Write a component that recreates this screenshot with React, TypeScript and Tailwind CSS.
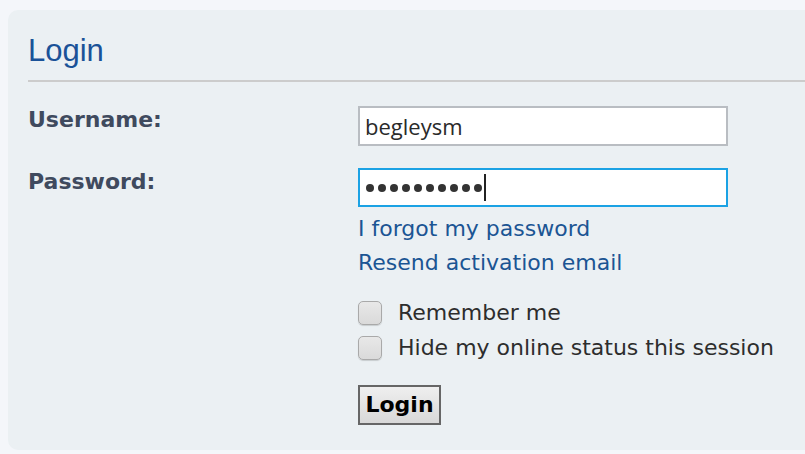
import { useState } from 'react';

const verdana = { fontFamily: 'Verdana, "DejaVu Sans", sans-serif' };

function Checkbox({ label }: { label: string }) {
  const [checked, setChecked] = useState(false);
  return (
    <label className="flex items-center gap-[16px] h-[35px] cursor-pointer">
      <span
        onClick={() => setChecked(!checked)}
        className="w-[24px] h-[24px] rounded-[5px] border border-[#a9a9a9] bg-gradient-to-b from-[#e8e8e8] to-[#dadada] shadow-[0_1px_1px_rgba(0,0,0,0.15)]"
      />
      <span className="text-[22px] text-[#2d2d2d]">{label}</span>
    </label>
  );
}

export default function App() {
  const [username, setUsername] = useState('begleysm');

  return (
    <div className="min-h-[454px] bg-[#f4f6fa] pl-2 pt-[10px]" style={verdana}>
      <div className="bg-[#ebf0f3] rounded-l-[10px] h-[440px] pl-[20px] pt-[23px]">
        <h1
          className="text-[31px] leading-[36px] text-[#1a5298] pb-[11px] border-b-2 border-[#cccccc]"
          style={{ fontFamily: '"Liberation Sans", Arial, sans-serif' }}
        >
          Login
        </h1>

        <div className="grid grid-cols-[330px_1fr] pt-[24px] text-[#3f4a5e]">
          <div className="font-bold text-[22px] leading-[26px] pt-[1px]">Username:</div>
          <div>
            <input
              value={username}
              onChange={e => setUsername(e.target.value)}
              className="w-[370px] h-[40px] border-2 border-[#b9bdc2] bg-white px-[5px] text-[22px] text-[#2a2a2a] outline-none"
              style={{ fontFamily: '"Open Sans", sans-serif' }}
            />
          </div>

          <div className="font-bold text-[22px] leading-[26px] pt-[23px]">Password:</div>
          <div className="pt-[22px]">
            <div className="w-[370px] h-[39px] border-2 border-[#1ba2e4] bg-white pl-[6px] flex items-center">
              <div className="flex gap-[4px]">
                {Array.from({ length: 10 }).map((_, i) => (
                  <span key={i} className="w-[8px] h-[8px] rounded-full bg-[#333]" />
                ))}
              </div>
              <span className="w-[2px] h-[27px] bg-[#222] ml-[2px]" />
            </div>
            <div className="pt-[5px] flex flex-col text-[22px] leading-[34px] text-[#1b5593]">
              <a href="#">I forgot my password</a>
              <a href="#">Resend activation email</a>
            </div>
            <div className="pt-[15px] flex flex-col">
              <Checkbox label="Remember me" />
              <Checkbox label="Hide my online status this session" />
            </div>
            <div className="pt-[20px]">
              <button className="w-[83px] h-[40px] border-2 border-[#666] bg-gradient-to-b from-[#efefef] to-[#d8d8d8] text-black font-bold text-[22px] leading-none">
                Login
              </button>
            </div>
          </div>
        </div>
      </div>
    </div>
  );
}
